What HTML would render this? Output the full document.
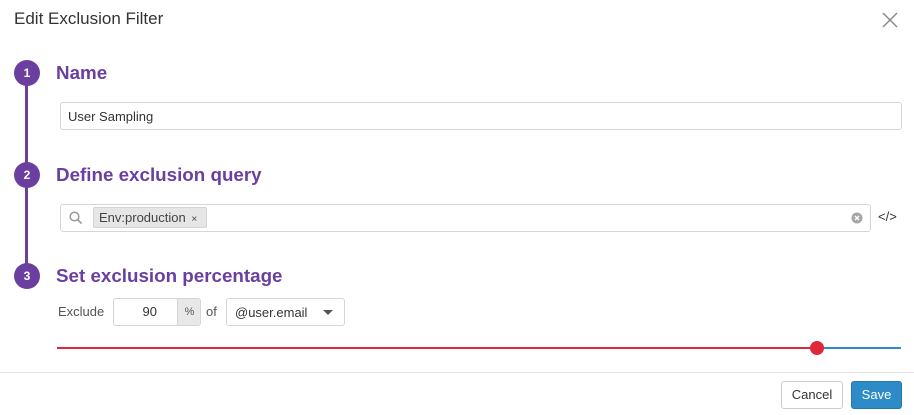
<!DOCTYPE html>
<html><head><style>
*{box-sizing:border-box;margin:0;padding:0}
body{width:914px;height:415px;background:#fff;font-family:"Liberation Sans",sans-serif;color:#333;position:relative;overflow:hidden}
.a{position:absolute}
.title{left:14px;top:9px;font-size:17px;color:#333}
.circ{width:26px;height:26px;border-radius:50%;background:#6b3fa0;color:#fff;font-size:12px;font-weight:bold;text-align:center;line-height:26px;left:14px}
.h{left:56px;font-size:18.8px;font-weight:bold;color:#6b3fa0}
.inp{border:1px solid #d6d6d6;border-radius:3px;background:#fff;font-size:13px;color:#333}
.btn{border:1px solid #ccc;border-radius:3px;font-size:13px;text-align:center;line-height:26px}
</style></head><body>
<div class="a title">Edit Exclusion Filter</div>
<svg class="a" style="left:882px;top:12px" width="16" height="16"><path d="M1 1L15 15M15 1L1 15" stroke="#888" stroke-width="1.5"/></svg>
<div class="a" style="left:25px;top:73px;width:3px;height:203px;background:#6b3fa0"></div>
<div class="a circ" style="top:60px">1</div>
<div class="a circ" style="top:162px">2</div>
<div class="a circ" style="top:263px">3</div>
<div class="a h" style="top:62px">Name</div>
<div class="a h" style="top:164px">Define exclusion query</div>
<div class="a h" style="top:265px">Set exclusion percentage</div>
<div class="a inp" style="left:60px;top:102px;width:842px;height:28px;padding:6px 7px">User Sampling</div>
<div class="a inp" style="left:60px;top:204px;width:811px;height:28px"></div>
<svg class="a" style="left:69px;top:211px" width="14" height="14"><circle cx="5.5" cy="5.5" r="4.3" fill="none" stroke="#999" stroke-width="1.5"/><path d="M8.6 8.6L12.5 12.5" stroke="#999" stroke-width="1.6"/></svg>
<div class="a" style="left:93px;top:207px;width:114px;height:21px;background:#e6e6e6;border:1px solid #d4d4d4;border-radius:2px;font-size:13px;line-height:19px;padding-left:5px;color:#444">Env:production <span style="font-size:10px;margin-left:2px">×</span></div>
<svg class="a" style="left:851px;top:212px" width="12" height="12"><circle cx="6" cy="6" r="5.5" fill="#a6a6a6"/><path d="M4 4L8 8M8 4L4 8" stroke="#fff" stroke-width="1.4"/></svg>
<div class="a" style="left:878px;top:209px;font-size:13px;color:#333">&lt;/&gt;</div>
<div class="a" style="left:58px;top:304px;font-size:13px;color:#555">Exclude</div>
<div class="a inp" style="left:113px;top:298px;width:88px;height:28px;overflow:hidden">
<div class="a" style="left:0;top:0;width:63px;height:26px;text-align:right;padding-right:20px;line-height:26px">90</div>
<div class="a" style="left:63px;top:0;width:24px;height:26px;background:#e8e8e8;border-left:1px solid #d6d6d6;text-align:center;line-height:26px;font-size:11px;color:#555">%</div></div>
<div class="a" style="left:206px;top:304px;font-size:13px;color:#555">of</div>
<div class="a inp" style="left:226px;top:298px;width:119px;height:28px;padding:6px 8px">@user.email</div>
<div class="a" style="left:323px;top:310px;border-left:5px solid transparent;border-right:5px solid transparent;border-top:5px solid #555"></div>
<div class="a" style="left:57px;top:347px;width:760px;height:2px;background:#e0283c"></div>
<div class="a" style="left:817px;top:347px;width:84px;height:2px;background:#2d8bc7"></div>
<div class="a" style="left:810px;top:341px;width:14px;height:14px;border-radius:50%;background:#e0283c"></div>
<div class="a" style="left:0;top:372px;width:914px;height:1px;background:#e2e2e2"></div>
<div class="a btn" style="left:781px;top:381px;width:62px;height:28px;color:#333;background:#fff">Cancel</div>
<div class="a btn" style="left:851px;top:381px;width:51px;height:28px;color:#fff;background:#2d8bc7;border-color:#2678ad">Save</div>
</body></html>
